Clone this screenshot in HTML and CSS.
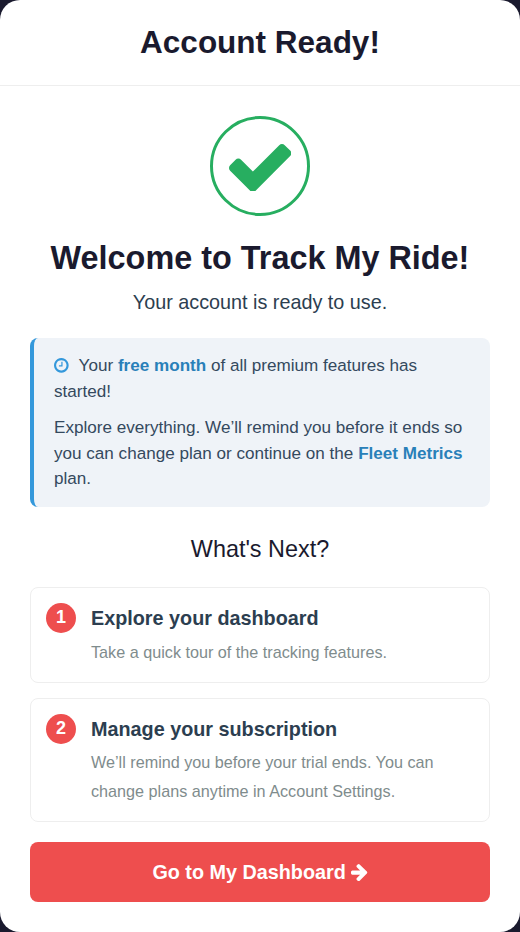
FILE: index.html
```html
<!DOCTYPE html>
<html lang="en">
<head>
<meta charset="utf-8">
<title>Account Ready</title>
<link rel="stylesheet" href="styles.css">
</head>
<body>
<main class="card">
  <header class="top"><h1>Account Ready!</h1></header>
  <section class="content">
    <div class="success">
      <svg class="check" viewBox="121 334 1550 1188" aria-hidden="true"><path fill="#27ae60" d="M1671 566q0 40-28 68l-724 724-136 136q-28 28-68 28t-68-28l-136-136-362-362q-28-28-28-68t28-68l136-136q28-28 68-28t68 28l294 295 656-657q28-28 68-28t68 28l136 136q28 28 28 68z"/></svg>
    </div>
    <h2 class="welcome">Welcome to Track My Ride!</h2>
    <p class="sub">Your account is ready to use.</p>
    <div class="notice">
      <p><svg class="clock" viewBox="128 128 1536 1536" aria-hidden="true"><path fill="#3498db" d="M1024 544v448q0 14-9 23t-23 9h-320q-14 0-23-9t-9-23v-64q0-14 9-23t23-9h224v-352q0-14 9-23t23-9h64q14 0 23 9t9 23zm416 352q0-148-73-273t-198-198-273-73-273 73-198 198-73 273 73 273 198 198 273 73 273-73 198-198 73-273zm224 0q0 209-103 385.5t-279.5 279.5-385.5 103-385.5-103-279.5-279.500-103-385.500 103-385.500 279.500-279.500 385.500-103 385.500 103 279.500 279.500 103 385.500z"/></svg> Your <strong>free month</strong> of all premium features has started!</p>
      <p>Explore everything. We’ll remind you before it ends so you can change plan or continue on the <strong>Fleet Metrics</strong> plan.</p>
    </div>
    <h3 class="next">What's Next?</h3>
    <div class="step">
      <div class="step-head"><span class="num">1</span><h4>Explore your dashboard</h4></div>
      <p>Take a quick tour of the tracking features.</p>
    </div>
    <div class="step">
      <div class="step-head"><span class="num">2</span><h4>Manage your subscription</h4></div>
      <p>We’ll remind you before your trial ends. You can change plans anytime in Account Settings.</p>
    </div>
    <a class="cta" href="#">Go to My Dashboard <svg class="arrow" viewBox="128 181 1472 1558" aria-hidden="true"><path fill="#fff" d="M1600 960q0 54-37 91l-651 651q-39 37-91 37-51 0-90-37l-75-75q-38-38-38-91t38-91l293-293h-704q-52 0-84.500-37.500t-32.500-90.500v-128q0-53 32.500-90.500t84.500-37.500h704l-293-294q-38-36-38-90t38-90l75-75q38-38 90-38 53 0 91 38l651 651q37 35 37 90z"/></svg></a>
  </section>
</main>
</body>
</html>
```
FILE: styles.css
```css
* { box-sizing: border-box; }
html, body { margin: 0; padding: 0; }
body {
  background: #1a1a2e;
  font-family: "Liberation Sans", Arial, sans-serif;
  width: 520px;
  height: 932px;
  overflow: hidden;
}
.card {
  background: #fff;
  border-radius: 20px;
  height: 932px;
  overflow: hidden;
}
.top {
  height: 86px;
  border-bottom: 1px solid #eee;
  display: flex;
  align-items: center;
  justify-content: center;
}
.top h1 {
  margin: 0;
  font-size: 31.5px;
  line-height: 37px;
  color: #1a1a2e;
  font-weight: 700;
}
.content { padding: 30px 30px 0; }
.success {
  width: 100px;
  height: 100px;
  margin: 0 auto;
  border: 3px solid #27ae60;
  border-radius: 50%;
  display: flex;
  align-items: center;
  justify-content: center;
}
.check { width: 62.3px; height: 47.8px; margin-top: 3px; }
.welcome {
  margin: 22px 0 0;
  text-align: center;
  font-size: 32.4px;
  line-height: 40px;
  color: #1a1a2e;
}
.sub {
  margin: 10px 0 0;
  text-align: center;
  font-size: 19.8px;
  line-height: 28px;
  color: #2c3e50;
}
.notice {
  margin-top: 22px;
  background: #eff3f8;
  border-left: 4px solid #3498db;
  border-radius: 8px;
  padding: 15px 20px;
  color: #34495e;
  font-size: 17.1px;
  line-height: 25.65px;
}
.notice p { margin: 0; }
.notice p + p { margin-top: 10.75px; }
.notice strong { color: #2980b9; }
.clock { width: 14.66px; height: 14.66px; vertical-align: -1.5px; margin-right: 5.5px; }
.next {
  margin: 28px 0 0;
  text-align: center;
  font-size: 23.4px;
  line-height: 28px;
  font-weight: 400;
  color: #1a1a2e;
}
.step {
  margin-top: 15px;
  border: 1px solid #eee;
  border-radius: 8px;
  padding: 15px 15px 14.8px;
}
.next + .step { margin-top: 23.9px; }
.step-head { display: flex; align-items: center; gap: 15px; }
.num {
  width: 30px;
  height: 30px;
  border-radius: 50%;
  background: #ee4e4e;
  color: #fff;
  font-weight: 700;
  font-size: 18px;
  display: flex;
  align-items: center;
  justify-content: center;
}
.step h4 { margin: 0; font-size: 19.8px; line-height: 30px; color: #2c3e50; }
.step p {
  margin: 4.7px 0 0 45px;
  font-size: 16.2px;
  line-height: 29.16px;
  color: #7f8c8d;
}
.cta {
  margin-top: 20px;
  height: 60px;
  background: #ee4e4e;
  border-radius: 8px;
  display: flex;
  align-items: center;
  justify-content: center;
  gap: 5.5px;
  color: #fff;
  font-weight: 700;
  font-size: 19.8px;
  text-decoration: none;
}
.arrow { width: 16.3px; height: 17.2px; }
```
